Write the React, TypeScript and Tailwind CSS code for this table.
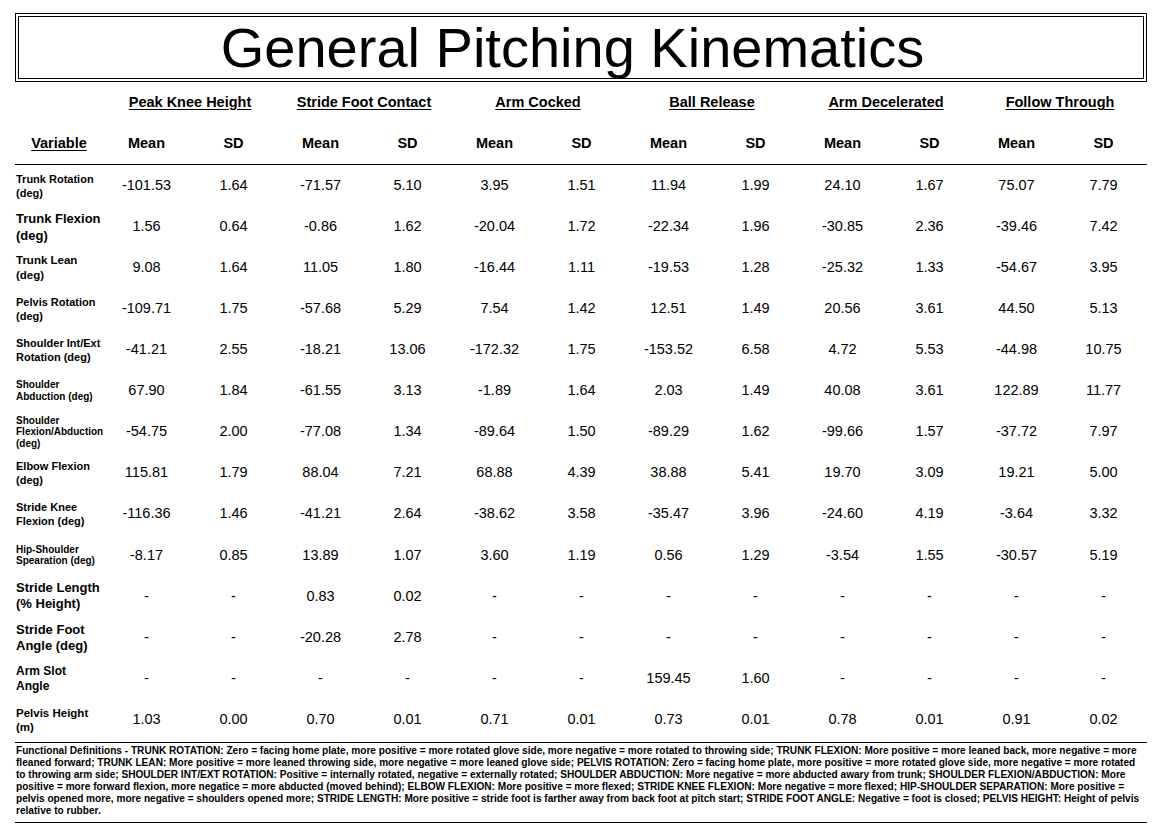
const font = { fontFamily: '"Liberation Sans", Arial, sans-serif' };

type Row = {
  label: string[];
  size: string;
  values: string[];
};

const rows: Row[] = [
  {
    label: ["Trunk Rotation", "(deg)"],
    size: "text-[11px] leading-[14px]",
    values: ["-101.53", "1.64", "-71.57", "5.10", "3.95", "1.51", "11.94", "1.99", "24.10", "1.67", "75.07", "7.79"],
  },
  {
    label: ["Trunk Flexion", "(deg)"],
    size: "text-[13px] leading-[17px]",
    values: ["1.56", "0.64", "-0.86", "1.62", "-20.04", "1.72", "-22.34", "1.96", "-30.85", "2.36", "-39.46", "7.42"],
  },
  {
    label: ["Trunk Lean", "(deg)"],
    size: "text-[11.5px] leading-[15px]",
    values: ["9.08", "1.64", "11.05", "1.80", "-16.44", "1.11", "-19.53", "1.28", "-25.32", "1.33", "-54.67", "3.95"],
  },
  {
    label: ["Pelvis Rotation", "(deg)"],
    size: "text-[11px] leading-[14px]",
    values: ["-109.71", "1.75", "-57.68", "5.29", "7.54", "1.42", "12.51", "1.49", "20.56", "3.61", "44.50", "5.13"],
  },
  {
    label: ["Shoulder Int/Ext", "Rotation (deg)"],
    size: "text-[11px] leading-[14px]",
    values: ["-41.21", "2.55", "-18.21", "13.06", "-172.32", "1.75", "-153.52", "6.58", "4.72", "5.53", "-44.98", "10.75"],
  },
  {
    label: ["Shoulder", "Abduction (deg)"],
    size: "text-[10px] leading-[12px]",
    values: ["67.90", "1.84", "-61.55", "3.13", "-1.89", "1.64", "2.03", "1.49", "40.08", "3.61", "122.89", "11.77"],
  },
  {
    label: ["Shoulder", "Flexion/Abduction", "(deg)"],
    size: "text-[10px] leading-[11.5px]",
    values: ["-54.75", "2.00", "-77.08", "1.34", "-89.64", "1.50", "-89.29", "1.62", "-99.66", "1.57", "-37.72", "7.97"],
  },
  {
    label: ["Elbow Flexion", "(deg)"],
    size: "text-[11px] leading-[14px]",
    values: ["115.81", "1.79", "88.04", "7.21", "68.88", "4.39", "38.88", "5.41", "19.70", "3.09", "19.21", "5.00"],
  },
  {
    label: ["Stride Knee", "Flexion (deg)"],
    size: "text-[11px] leading-[14px]",
    values: ["-116.36", "1.46", "-41.21", "2.64", "-38.62", "3.58", "-35.47", "3.96", "-24.60", "4.19", "-3.64", "3.32"],
  },
  {
    label: ["Hip-Shoulder", "Spearation (deg)"],
    size: "text-[10px] leading-[11.5px]",
    values: ["-8.17", "0.85", "13.89", "1.07", "3.60", "1.19", "0.56", "1.29", "-3.54", "1.55", "-30.57", "5.19"],
  },
  {
    label: ["Stride Length", "(% Height)"],
    size: "text-[13px] leading-[16px]",
    values: ["-", "-", "0.83", "0.02", "-", "-", "-", "-", "-", "-", "-", "-"],
  },
  {
    label: ["Stride Foot", "Angle (deg)"],
    size: "text-[13px] leading-[16px]",
    values: ["-", "-", "-20.28", "2.78", "-", "-", "-", "-", "-", "-", "-", "-"],
  },
  {
    label: ["Arm Slot", "Angle"],
    size: "text-[12px] leading-[15px]",
    values: ["-", "-", "-", "-", "-", "-", "159.45", "1.60", "-", "-", "-", "-"],
  },
  {
    label: ["Pelvis Height", "(m)"],
    size: "text-[11.5px] leading-[14px]",
    values: ["1.03", "0.00", "0.70", "0.01", "0.71", "0.01", "0.73", "0.01", "0.78", "0.01", "0.91", "0.02"],
  },
];

const phases = [
  "Peak Knee Height",
  "Stride Foot Contact",
  "Arm Cocked",
  "Ball Release",
  "Arm Decelerated",
  "Follow Through",
];

const notes = [
  "Functional Definitions - TRUNK ROTATION: Zero = facing home plate, more positive = more rotated glove side, more negative = more rotated to throwing side; TRUNK FLEXION: More positive = more leaned back, more negative = more",
  "fleaned forward; TRUNK LEAN: More positive = more leaned throwing side, more negative = more leaned glove side; PELVIS ROTATION: Zero = facing home plate, more positive = more rotated glove side, more negative = more rotated",
  "to throwing arm side; SHOULDER INT/EXT ROTATION: Positive = internally rotated, negative = externally rotated; SHOULDER ABDUCTION: More negative = more abducted awary from trunk; SHOULDER FLEXION/ABDUCTION: More",
  "positive = more forward flexion, more negatice = more abducted (moved behind); ELBOW FLEXION: More positive = more flexed; STRIDE KNEE FLEXION: More negative = more flexed; HIP-SHOULDER SEPARATION: More positive =",
  "pelvis opened more, more negative = shoulders opened more; STRIDE LENGTH: More positive = stride foot is farther away from back foot at pitch start; STRIDE FOOT ANGLE: Negative = foot is closed; PELVIS HEIGHT: Height of pelvis",
  "relative to rubber.",
];

const grid = "grid grid-cols-[88px_repeat(12,87px)]";

export default function App() {
  return (
    <div className="w-[1158px] h-[832px] bg-white text-black overflow-hidden" style={font}>
      <div className="mx-[15px] w-[1132px] pt-[13px]">
        <div className="h-[69px] pr-[17px] border-[4px] border-double border-black flex items-center justify-center">
          <h1 className="text-[56px] leading-none">General Pitching Kinematics</h1>
        </div>

        <div className="grid grid-cols-[88px_repeat(6,174px)] h-[42px] items-center">
          <div />
          {phases.map(p => (
            <div key={p} className="text-center text-[14.5px] font-bold underline underline-offset-2">
              {p}
            </div>
          ))}
        </div>

        <div className={`${grid} h-[41px] items-center border-b-[1.5px] border-black`}>
          <div className="text-center text-[14.5px] font-bold underline underline-offset-2">Variable</div>
          {phases.map(p => (
            <>
              <div key={p + "m"} className="text-center text-[14.5px] font-bold">Mean</div>
              <div key={p + "s"} className="text-center text-[14.5px] font-bold">SD</div>
            </>
          ))}
        </div>

        {rows.map(r => (
          <div key={r.label.join(" ")} className={`${grid} h-[41.1px] items-center`}>
            <div className={`pl-[1px] font-bold ${r.size}`}>
              {r.label.map(l => (
                <div key={l}>{l}</div>
              ))}
            </div>
            {r.values.map((v, i) => (
              <div key={i} className="text-center text-[14.5px]">
                {v}
              </div>
            ))}
          </div>
        ))}

        <div className="mt-[1.5px] border-t-[1.5px] border-b-[1.5px] border-black pt-[2.5px] pb-[5px]">
          {notes.map(n => (
            <div key={n} className="pl-[1px] whitespace-nowrap text-[10.1px] leading-[12px] font-bold">
              {n}
            </div>
          ))}
        </div>
      </div>
    </div>
  );
}
